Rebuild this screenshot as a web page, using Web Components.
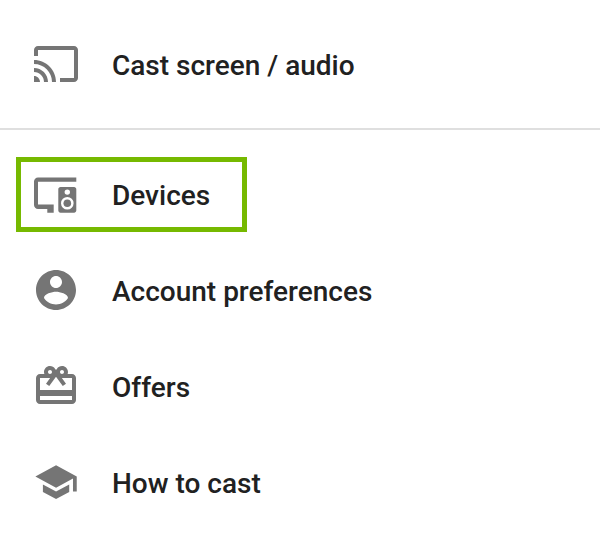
<!DOCTYPE html>
<html lang="en">
<head>
<meta charset="utf-8">
<title>Menu</title>
<style>
body { margin: 0; background: #fff; color: #212121; font-family: Roboto, "Liberation Sans", sans-serif; }
</style>
</head>
<body>
<app-menu>
  <menu-group>
    <menu-item icon="cast">Cast screen / audio</menu-item>
  </menu-group>
  <menu-group>
    <menu-item icon="devices" highlighted>Devices</menu-item>
    <menu-item icon="account">Account preferences</menu-item>
    <menu-item icon="offers">Offers</menu-item>
    <menu-item icon="school">How to cast</menu-item>
  </menu-group>
</app-menu>
<script>
const ICONS = {
  cast: '<path d="M21 3H3c-1.1 0-2 .9-2 2v3h2V5h18v14h-7v2h7c1.1 0 2-.9 2-2V5c0-1.1-.9-2-2-2zM1 18v3h3c0-1.66-1.34-3-3-3zm0-4v2c2.76 0 5 2.24 5 5h2c0-3.87-3.13-7-7-7zm0-4v2c4.97 0 9 4.03 9 9h2c0-6.08-4.93-11-11-11z"/>',
  devices: '<g transform="scale(.5)"><path d="M44.3 7.4H6C3.8 7.4 2 9.2 2 11.4v23.6c0 2.2 1.8 4 4 4h9.3v3.7h6.4v-8.1H6V11.7h38.3z"/><path fill-rule="evenodd" d="M28.5 17h13.6c1.2 0 2.2 1 2.2 2.2v21.3c0 1.2-1 2.2-2.2 2.2H28.5c-1.2 0-2.2-1-2.2-2.2V19.2c0-1.2 1-2.2 2.2-2.2zm6.8 2.4a2.7 2.7 0 1 0 0 5.4 2.7 2.7 0 0 0 0-5.4zm0 7.6a6.3 6.3 0 1 0 0 12.6 6.3 6.3 0 0 0 0-12.6z"/><circle cx="35.3" cy="33.3" r="3.8"/></g>',
  account: '<path d="M12 2C6.48 2 2 6.48 2 12s4.48 10 10 10 10-4.48 10-10S17.52 2 12 2zm0 3c1.66 0 3 1.34 3 3s-1.34 3-3 3-3-1.34-3-3 1.34-3 3-3zm0 14.2c-2.5 0-4.71-1.28-6-3.22.03-1.99 4-3.08 6-3.08 1.99 0 5.97 1.09 6 3.08-1.29 1.94-3.5 3.22-6 3.22z"/>',
  offers: '<path d="M20 6h-2.18c.11-.31.18-.65.18-1 0-1.66-1.34-3-3-3-1.05 0-1.96.54-2.5 1.35l-.5.67-.5-.68C10.96 2.54 10.05 2 9 2 7.34 2 6 3.34 6 5c0 .35.07.69.18 1H4c-1.11 0-1.99.89-1.99 2L2 19c0 1.11.89 2 2 2h16c1.11 0 2-.89 2-2V8c0-1.11-.89-2-2-2zm-5-2c.55 0 1 .45 1 1s-.45 1-1 1-1-.45-1-1 .45-1 1-1zM9 4c.55 0 1 .45 1 1s-.45 1-1 1-1-.45-1-1 .45-1 1-1zm11 15H4v-2h16v2zm0-5H4V8h5.08L7 10.83 8.62 12 11 8.76l1-1.36 1 1.36L15.38 12 17 10.83 14.92 8H20v6z"/>',
  school: '<path transform="translate(.75 .8) scale(.94)" d="M5 13.18v4L12 21l7-3.82v-4L12 17l-7-3.82zM12 3L1 9l11 6 9-4.91V17h2V9L12 3z"/>'
};

class AppMenu extends HTMLElement {
  constructor() {
    super();
    this.attachShadow({ mode: 'open' }).innerHTML = `
      <style>:host { display: flex; flex-direction: column; box-sizing: border-box; height: 546px; overflow: hidden; }</style>
      <slot></slot>`;
  }
}

class MenuGroup extends HTMLElement {
  constructor() {
    super();
    this.attachShadow({ mode: 'open' }).innerHTML = `
      <style>
        :host { display: flex; flex-direction: column; padding: 16px 0; }
        :host(:not(:last-child)) { border-bottom: 2px solid #dfdfdf; }
      </style>
      <slot></slot>`;
  }
}

class MenuItem extends HTMLElement {
  constructor() {
    super();
    this.attachShadow({ mode: 'open' });
  }
  connectedCallback() {
    this.shadowRoot.innerHTML = `
      <style>
        :host { display: flex; align-items: center; gap: 32px; height: 96px; padding-left: 32px; position: relative; }
        svg { width: 48px; height: 48px; fill: #757575; flex: none; }
        .label { font-size: 28px; font-weight: 500; line-height: 32px; white-space: nowrap; padding-top: 4px; }
        :host([highlighted])::after {
          content: ""; position: absolute; left: 16px; top: 11px; width: 231px; height: 75px;
          box-sizing: border-box; border: 5px solid #76b900;
        }
      </style>
      <svg viewBox="0 0 24 24" aria-hidden="true">${ICONS[this.getAttribute('icon')]}</svg>
      <span class="label"><slot></slot></span>`;
  }
}

customElements.define('app-menu', AppMenu);
customElements.define('menu-group', MenuGroup);
customElements.define('menu-item', MenuItem);
</script>
</body>
</html>
